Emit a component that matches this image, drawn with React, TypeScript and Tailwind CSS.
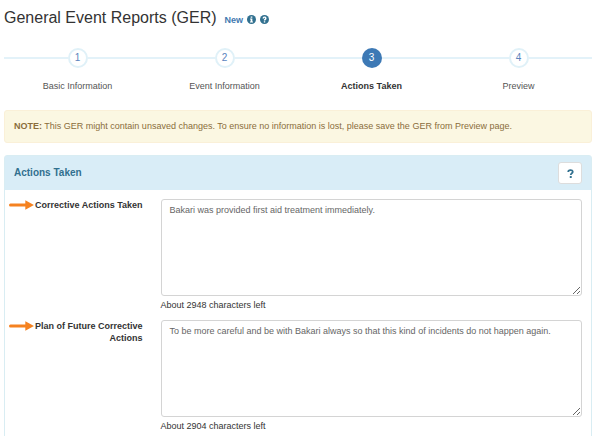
import React from "react";

const steps = [
  { id: 1, label: "Basic Information" },
  { id: 2, label: "Event Information" },
  { id: 3, label: "Actions Taken" },
  { id: 4, label: "Preview" },
];

const fields = [
  {
    id: "corrective-actions",
    label: "Corrective Actions Taken",
    value: "Bakari was provided first aid treatment immediately.",
    left: 2948,
  },
  {
    id: "future-actions",
    label: "Plan of Future Corrective\nActions",
    value:
      "To be more careful and be with Bakari always so that this kind of incidents do not happen again.",
    left: 2904,
  },
];

function InfoIcon() {
  return (
    <svg viewBox="0 0 16 16" className="size-[9px]" aria-hidden="true">
      <circle cx="8" cy="8" r="8" fill="#31708f" />
      <path d="M6.5 2.5h3v2.4h-3zM5.5 6.2h4v5.3h1.2v1.9H5.3v-1.9h1.2V8H5.5z" fill="#fff" />
    </svg>
  );
}

function HelpIcon() {
  return (
    <svg viewBox="0 0 16 16" className="size-[9px]" aria-hidden="true">
      <circle cx="8" cy="8" r="8" fill="#31708f" />
      <path d="M4.6 6.3C4.6 1.6 11.6 1.7 11.6 6c0 2.3-2.3 2.3-2.3 3.8H6.8c0-2.7 2.2-2.6 2.2-3.9 0-1.2-1.8-1.2-1.8.4zM6.8 11h2.5v2.4H6.8z" fill="#fff" />
    </svg>
  );
}

function Arrow() {
  return (
    <svg viewBox="0 0 26 10" className="mt-px h-[10px] min-w-0 flex-1" preserveAspectRatio="none" aria-hidden="true">
      <path d="M1.5 5H18" stroke="#f58220" strokeWidth="3" strokeLinecap="round" />
      <path d="M17 0.2L26 5L17 9.8Z" fill="#f58220" />
    </svg>
  );
}

export default function App() {
  return (
    <main className="h-screen overflow-hidden bg-white pt-1 pr-2 pl-1 font-['Liberation_Sans',Arial,sans-serif] text-[9px] leading-3 text-[#333]">
      <header className="flex items-baseline gap-1">
        <h1 className="pr-1 text-[16px] leading-[27px]">General Event Reports (GER)</h1>
        <span className="font-bold text-[#4279b0]">New</span>
        <span className="flex gap-1 self-center pt-1">
          <InfoIcon />
          <HelpIcon />
        </span>
      </header>

      <ol className="mt-[17px] grid grid-cols-4">
        {steps.map((step) => {
          const current = step.id === 3;
          return (
            <li key={step.id} className="flex flex-col items-center" aria-current={current ? "step" : undefined}>
              <div className="flex w-full items-center">
                <span className="h-[2px] flex-1 bg-[#e3f2f9]" />
                <span
                  className={
                    current
                      ? "flex size-5 items-center justify-center rounded-full bg-[#3d79b5] text-[10px] text-white"
                      : "flex size-5 items-center justify-center rounded-full border-2 border-[#e0f1f8] bg-white text-[10px] text-[#5b84bd]"
                  }
                >
                  {step.id}
                </span>
                <span className="h-[2px] flex-1 bg-[#e3f2f9]" />
              </div>
              <span className={current ? "mt-3 font-bold" : "mt-3 text-[#555]"}>{step.label}</span>
            </li>
          );
        })}
      </ol>

      <div role="alert" className="mt-[18px] rounded-[3px] border border-[#faf0d8] bg-[#fbf7e2] px-[9px] py-[9px] leading-[13px] text-[#8a6d3b]">
        <b>NOTE:</b> This GER might contain unsaved changes. To ensure no information is lost, please save the GER from Preview page.
      </div>

      <section className="mt-3 rounded-[3px] border border-[#d9edf3] pb-8">
        <div className="flex items-center justify-between bg-[#d9edf7] px-[9px] py-[6px]">
          <h2 className="text-[10px] font-bold text-[#31708f]">Actions Taken</h2>
          <button
            type="button"
            aria-label="Help"
            className="flex h-[22px] w-6 items-center justify-center rounded-[3px] border border-[#ddd] bg-white"
          >
            <svg viewBox="0 0 8 11" className="h-[9px] w-[7px]" aria-hidden="true">
              <path d="M1.2 3.6C1.2.5 6.8.5 6.8 3.4 6.8 5.3 4.3 5.2 4.3 7.4" fill="none" stroke="#31708f" strokeWidth="2.1" />
              <path d="M3.1 8.6h2.4V11H3.1z" fill="#31708f" />
            </svg>
          </button>
        </div>

        <div className="flex flex-col gap-[9px] pt-[9px]">
          {fields.map((field) => (
            <div key={field.id} className="grid grid-cols-4">
              <label htmlFor={field.id} className="flex justify-between gap-px pr-[9px] pl-1 text-right font-bold">
                <Arrow />
                <span className="shrink-0 whitespace-pre-line">{field.label}</span>
              </label>
              <div className="col-span-3 px-[9px]">
                <textarea
                  id={field.id}
                  defaultValue={field.value}
                  className="block h-[97px] w-full resize-y rounded-[3px] border border-[#d4d4d4] px-2 py-1 text-[#666]"
                />
                <p className="mt-[3px]">About {field.left} characters left</p>
              </div>
            </div>
          ))}
        </div>
      </section>
    </main>
  );
}
